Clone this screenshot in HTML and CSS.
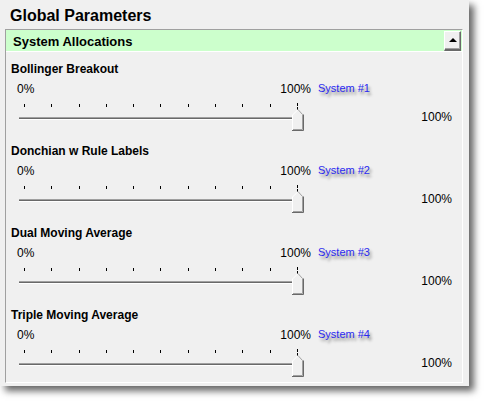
FILE: index.html
```html
<!DOCTYPE html>
<html>
<head>
<meta charset="utf-8">
<link rel="stylesheet" href="styles.css">
</head>
<body>
<div class="window">
  <h1 class="title">Global Parameters</h1>
  <div class="panel">
    <div class="panel-header">
      <span class="panel-title">System Allocations</span>
      <button class="collapse-btn"><span class="tri"></span></button>
    </div>
    <div class="sections">
      <div class="section">
        <div class="sec-label">Bollinger Breakout</div>
        <div class="sec-body">
          <div class="slider">
            <div class="scale"><span>0%</span><span>100%</span></div>
            <div class="ticks"><i></i><i></i><i></i><i></i><i></i><i></i><i></i><i></i><i></i><i></i><i class="cur"></i></div>
            <div class="track"></div>
            <svg class="thumb" width="13" height="23" viewBox="0 0 13 23"><path d="M0.5,22 V6 L6,0.5 L11.5,6 V22 Z" fill="#f0f0f0"/><path d="M0.5,21.5 V6 L6,0.5" stroke="#fff" fill="none"/><path d="M6,0.5 L10.5,5.5 V20.5 H1" stroke="#a0a0a0" fill="none"/><path d="M11.5,5.5 V21.5 H0" stroke="#696969" fill="none"/></svg>
          </div>
          <div class="side">
            <span class="sys">System #1</span>
            <span class="val">100%</span>
          </div>
        </div>
      </div>
      <div class="section">
        <div class="sec-label">Donchian w Rule Labels</div>
        <div class="sec-body">
          <div class="slider">
            <div class="scale"><span>0%</span><span>100%</span></div>
            <div class="ticks"><i></i><i></i><i></i><i></i><i></i><i></i><i></i><i></i><i></i><i></i><i class="cur"></i></div>
            <div class="track"></div>
            <svg class="thumb" width="13" height="23" viewBox="0 0 13 23"><path d="M0.5,22 V6 L6,0.5 L11.5,6 V22 Z" fill="#f0f0f0"/><path d="M0.5,21.5 V6 L6,0.5" stroke="#fff" fill="none"/><path d="M6,0.5 L10.5,5.5 V20.5 H1" stroke="#a0a0a0" fill="none"/><path d="M11.5,5.5 V21.5 H0" stroke="#696969" fill="none"/></svg>
          </div>
          <div class="side">
            <span class="sys">System #2</span>
            <span class="val">100%</span>
          </div>
        </div>
      </div>
      <div class="section">
        <div class="sec-label">Dual Moving Average</div>
        <div class="sec-body">
          <div class="slider">
            <div class="scale"><span>0%</span><span>100%</span></div>
            <div class="ticks"><i></i><i></i><i></i><i></i><i></i><i></i><i></i><i></i><i></i><i></i><i class="cur"></i></div>
            <div class="track"></div>
            <svg class="thumb" width="13" height="23" viewBox="0 0 13 23"><path d="M0.5,22 V6 L6,0.5 L11.5,6 V22 Z" fill="#f0f0f0"/><path d="M0.5,21.5 V6 L6,0.5" stroke="#fff" fill="none"/><path d="M6,0.5 L10.5,5.5 V20.5 H1" stroke="#a0a0a0" fill="none"/><path d="M11.5,5.5 V21.5 H0" stroke="#696969" fill="none"/></svg>
          </div>
          <div class="side">
            <span class="sys">System #3</span>
            <span class="val">100%</span>
          </div>
        </div>
      </div>
      <div class="section">
        <div class="sec-label">Triple Moving Average</div>
        <div class="sec-body">
          <div class="slider">
            <div class="scale"><span>0%</span><span>100%</span></div>
            <div class="ticks"><i></i><i></i><i></i><i></i><i></i><i></i><i></i><i></i><i></i><i></i><i class="cur"></i></div>
            <div class="track"></div>
            <svg class="thumb" width="13" height="23" viewBox="0 0 13 23"><path d="M0.5,22 V6 L6,0.5 L11.5,6 V22 Z" fill="#f0f0f0"/><path d="M0.5,21.5 V6 L6,0.5" stroke="#fff" fill="none"/><path d="M6,0.5 L10.5,5.5 V20.5 H1" stroke="#a0a0a0" fill="none"/><path d="M11.5,5.5 V21.5 H0" stroke="#696969" fill="none"/></svg>
          </div>
          <div class="side">
            <span class="sys">System #4</span>
            <span class="val">100%</span>
          </div>
        </div>
      </div>
    </div>
  </div>
</div>
</body>
</html>
```
FILE: styles.css
```css
html, body {
  margin: 0;
  padding: 0;
  background: #ffffff;
}
body {
  width: 485px;
  height: 401px;
  overflow: hidden;
  font-family: "Liberation Sans", Arial, sans-serif;
  color: #000;
}
.window {
  width: 469px;
  height: 386px;
  background: #f0f0f0;
  box-shadow: 5px 5px 7px rgba(0, 0, 0, 0.6);
  box-sizing: border-box;
  padding: 0 6px 0 5px;
  display: flex;
  flex-direction: column;
}
.title {
  margin: 0;
  padding: 6px 0 0 5px;
  height: 29px;
  box-sizing: border-box;
  font-size: 16px;
  line-height: 19px;
  font-weight: bold;
}
.panel {
  border-top: 1px solid #a0a0a0;
  border-left: 1px solid #a0a0a0;
  border-right: 1px solid #ffffff;
  border-bottom: 1px solid #ffffff;
  height: 354px;
  box-sizing: border-box;
  display: flex;
  flex-direction: column;
}
.panel-header {
  background: #ccffcc;
  height: 23px;
  border-bottom: 1px solid #ffffff;
  display: flex;
  align-items: center;
  justify-content: space-between;
  padding: 0 1px 0 7px;
}
.panel-title {
  font-size: 13px;
  font-weight: bold;
  line-height: 16px;
  padding-top: 3px;
}
.collapse-btn {
  width: 17px;
  height: 20px;
  margin: 0;
  padding: 0;
  background: #f0f0f0;
  border-top: 1px solid #ffffff;
  border-left: 1px solid #ffffff;
  border-right: 1px solid #696969;
  border-bottom: 2px solid #696969;
  box-shadow: inset -1px -1px 0 #a0a0a0;
  display: flex;
  align-items: center;
  justify-content: center;
  margin-top: 1px;
}
.tri {
  width: 0;
  height: 0;
  border-left: 4px solid transparent;
  border-right: 4px solid transparent;
  border-bottom: 4px solid #000;
  margin-bottom: 1px;
}
.sections {
  padding: 10px 0 0 5px;
  display: flex;
  flex-direction: column;
}
.section {
  height: 82px;
  display: flex;
  flex-direction: column;
}
.sec-label {
  font-size: 12px;
  font-weight: bold;
  line-height: 14px;
}
.sec-body {
  display: flex;
  margin-top: 6px;
}
.slider {
  position: relative;
  width: 300px;
  height: 50px;
}
.scale {
  display: flex;
  justify-content: space-between;
  padding-left: 6px;
  font-size: 12px;
  line-height: 14px;
}
.ticks {
  display: flex;
  justify-content: space-between;
  margin: 8px 0 0 13px;
  width: 274px;
  height: 4px;
}
.ticks i {
  width: 1px;
  height: 3px;
  background: #000;
}
.ticks i.cur {
  height: 7px;
  margin-top: -1px;
  background: repeating-linear-gradient(#000 0 3px, transparent 3px 4px);
}
.track {
  margin: 9px 0 0 8px;
  width: 280px;
  height: 1px;
  border-top: 1px solid #a0a0a0;
  background: #696969;
  border-bottom: 1px solid #ffffff;
}
.thumb {
  position: absolute;
  left: 281px;
  top: 27px;
}
.side {
  flex: 1;
  display: flex;
  flex-direction: column;
  padding-left: 7px;
  padding-right: 10px;
}
.sys {
  color: #2a2af0;
  font-size: 11px;
  line-height: 13px;
  text-shadow: 2px 3px 3px rgba(0, 0, 0, 0.45);
  margin-top: 0;
}
.val {
  align-self: flex-end;
  font-size: 12px;
  line-height: 14px;
  margin-top: 15px;
}
```
